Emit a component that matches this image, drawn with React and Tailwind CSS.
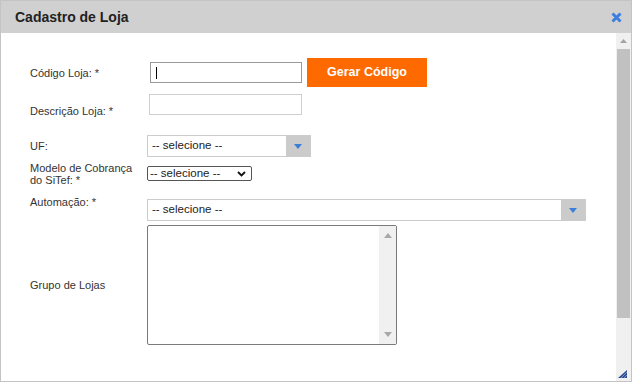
export default function App() {
  const label = "w-[117px] shrink-0 text-[11px] leading-[12px] text-[#333]";
  const triDown = (
    <svg width="8" height="5" viewBox="0 0 8 5">
      <polygon points="0,0 8,0 4,5" fill="#3b7fd8" />
    </svg>
  );
  return (
    <div className="w-[632px] h-[383px] bg-white font-['Liberation_Sans',Arial,sans-serif]">
      <div className="relative h-[382px] border border-[#c4c4c4] flex flex-col">
        <div className="h-[32px] shrink-0 bg-[#d0d0d0] flex items-center justify-between pl-[14px] pr-[9px]">
          <span className="text-[14px] font-bold text-[#222]">Cadastro de Loja</span>
          <svg width="11" height="11" viewBox="0 0 11 11" className="mt-[1px]">
            <path d="M1.5 1.5 L9.5 9.5 M9.5 1.5 L1.5 9.5" stroke="#3d7fe0" strokeWidth="3" strokeLinecap="butt" />
          </svg>
        </div>
        <div className="flex-1 flex min-h-0">
          <div className="flex-1 pl-[29px] pt-[25px]">
            {/* Row 1 */}
            <div className="flex items-center h-[29px]">
              <div className={label}>Código Loja: *</div>
              <div className="ml-[3px] w-[152px] h-[21px] border border-[#9a9a9a] flex items-center pl-[5px]">
                <div className="w-[1px] h-[12px] bg-black" />
              </div>
              <div className="ml-[5px] w-[120px] h-[29px] bg-[#ff6a00] flex items-center justify-center text-white text-[12.5px] font-bold">
                Gerar Código
              </div>
            </div>
            {/* Row 2 */}
            <div className="flex items-start h-[21px] mt-[7px]">
              <div className={label + " pt-[11px]"}>Descrição Loja: *</div>
              <div className="ml-[2px] w-[153px] h-[21px] border border-[#cfcfcf]" />
            </div>
            {/* Row 3 */}
            <div className="flex items-center h-[22px] mt-[20px]">
              <div className={label}>UF:</div>
              <div className="w-[164px] h-[22px] border border-[#cccccc] flex">
                <div className="flex-1 flex items-center pl-[4px] text-[11.5px] text-[#222]">-- selecione --</div>
                <div className="w-[24px] bg-[#cbcbcb] flex items-center justify-center">{triDown}</div>
              </div>
            </div>
            {/* Row 4 */}
            <div className="flex items-start h-[22px] mt-[5px]">
              <div className={label}>
                Modelo de Cobrança
                <br />
                do SiTef: *
              </div>
              <div className="mt-[4px] w-[105px] h-[15px] border border-[#555] rounded-[2px] flex items-center justify-between pl-[2px] pr-[5px] text-[11.5px] text-[#222]">
                <span>-- selecione --</span>
                <svg width="9" height="6" viewBox="0 0 9 6">
                  <polyline points="1,1 4.5,4.5 8,1" fill="none" stroke="#111" strokeWidth="1.8" />
                </svg>
              </div>
            </div>
            {/* Row 5 */}
            <div className="flex items-start h-[22px] mt-[15px]">
              <div className={label + " -mt-[3px]"}>Automação: *</div>
              <div className="w-[439px] h-[22px] border border-[#cccccc] flex">
                <div className="flex-1 flex items-center pl-[4px] text-[11.5px] text-[#222]">-- selecione --</div>
                <div className="w-[24px] bg-[#cbcbcb] flex items-center justify-center">{triDown}</div>
              </div>
            </div>
            {/* Row 6 */}
            <div className="flex items-center h-[120px] mt-[4px]">
              <div className={label}>Grupo de Lojas</div>
              <div className="w-[250px] h-[120px] border border-[#7a7a7a] rounded-[2px] flex justify-end overflow-hidden">
                <div className="w-[17px] bg-[#f0f0f0] flex flex-col items-center justify-between py-[7px]">
                  <svg width="8" height="5" viewBox="0 0 8 5">
                    <polygon points="0,5 8,5 4,0" fill="#a8a8a8" />
                  </svg>
                  <svg width="8" height="5" viewBox="0 0 8 5">
                    <polygon points="0,0 8,0 4,5" fill="#a8a8a8" />
                  </svg>
                </div>
              </div>
            </div>
          </div>
          {/* Main scrollbar */}
          <div className="w-[15px] bg-[#f0f0f0] flex flex-col items-center">
            <div className="h-[16px] flex items-center justify-center">
              <svg width="7" height="4" viewBox="0 0 7 4">
                <polygon points="0,4 7,4 3.5,0" fill="#a3a3a3" />
              </svg>
            </div>
            <div className="w-[13px] h-[269px] bg-[#c1c1c1]" />
          </div>
        </div>
        <svg width="9" height="8" viewBox="0 0 9 8" className="absolute right-[4px] bottom-[3px]">
          <polygon points="9,0 9,8 0,8" fill="#2f4f8f" />
          <path d="M3 8 L9 2 M6 8 L9 5" stroke="#8aa6d8" strokeWidth="0.8" />
        </svg>
      </div>
    </div>
  );
}
